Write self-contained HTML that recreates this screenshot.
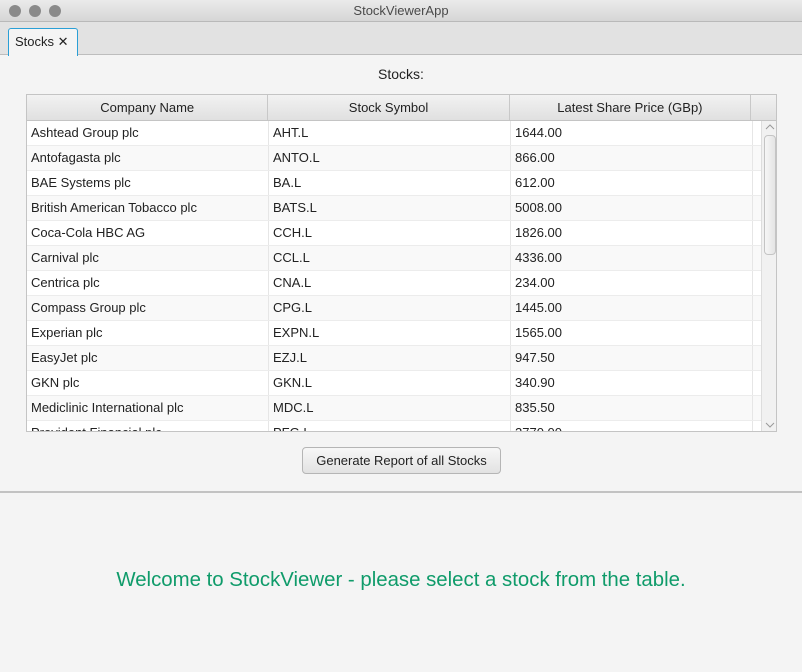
<!DOCTYPE html>
<html><head><meta charset="utf-8"><style>
*{margin:0;padding:0;box-sizing:border-box}
body{width:802px;height:672px;background:#f4f4f4;font-family:"Liberation Sans",sans-serif;font-size:13px;color:#222;position:relative;overflow:hidden}
.title{position:absolute;left:0;top:0;width:802px;height:22px;background:linear-gradient(#ebebeb,#d6d6d6);border-bottom:1px solid #b9b9b9;text-align:center;line-height:22px;font-size:13px;color:#4a4a4a}
.dot{position:absolute;top:5px;width:12px;height:12px;border-radius:50%;background:#8a8a8a}
.tabbar{position:absolute;left:0;top:22px;width:802px;height:33px;background:#e2e2e2;border-bottom:1px solid #bdbdbd}
.tab{position:absolute;left:8px;top:6px;width:70px;height:28px;background:#f4f4f4;border:1px solid #2a9fd6;border-bottom:none;border-radius:3px 3px 0 0;font-size:13px;line-height:26px;padding-left:6px}
.lbl{position:absolute;top:66px;left:0;width:802px;text-align:center;font-size:14px}
.table{position:absolute;left:26px;top:94px;width:751px;height:338px;border:1px solid #c4c4c4;background:#fff;overflow:hidden}
.hdr{height:26px;background:linear-gradient(#f2f2f2,#e0e0e0);border-bottom:1px solid #c4c4c4;display:flex}
.hdr div{border-right:1px solid #c8c8c8;text-align:center;line-height:25px;font-size:13px}
.row{height:25px;display:flex;border-bottom:1px solid #ececec;background:#fff}
.row:nth-child(even){background:#f9f9f9}
.row div{border-right:1px solid #e6e6e6;line-height:24px;padding-left:4px;font-size:13px}
.c1{width:242px}.c2{width:242px}.c3{width:242px}
.sb{position:absolute;left:734px;top:26px;width:16px;height:312px;background:#f1f1f1;border-left:1px solid #ddd}
.thumb{position:absolute;left:2px;top:14px;width:12px;height:120px;border:1px solid #c4c4c4;border-radius:4px;background:linear-gradient(90deg,#f6f6f6,#e4e4e4)}
.btn{position:absolute;left:302px;top:447px;width:199px;height:27px;border:1px solid #b5b5b5;border-radius:4px;background:linear-gradient(#f7f7f7,#e2e2e2);text-align:center;line-height:25px;font-size:13px}
.div{position:absolute;left:0;top:491px;width:802px;height:2px;background:#c2c2c2}
.welcome{position:absolute;left:0;top:569px;width:802px;text-align:center;font-size:20.4px;color:#0f9b6a}
</style></head><body>
<div class="title">StockViewerApp<span class="dot" style="left:9px"></span><span class="dot" style="left:29px"></span><span class="dot" style="left:49px"></span></div>
<div class="tabbar"><div class="tab">Stocks ✕</div></div>
<div class="lbl">Stocks:</div>
<div class="table">
<div class="hdr"><div class="c1">Company Name</div><div class="c2">Stock Symbol</div><div class="c3">Latest Share Price (GBp)</div><div style="width:25px;border:none"></div></div>
<div>
<div class="row"><div class="c1">Ashtead Group plc</div><div class="c2">AHT.L</div><div class="c3">1644.00</div></div>
<div class="row"><div class="c1">Antofagasta plc</div><div class="c2">ANTO.L</div><div class="c3">866.00</div></div>
<div class="row"><div class="c1">BAE Systems plc</div><div class="c2">BA.L</div><div class="c3">612.00</div></div>
<div class="row"><div class="c1">British American Tobacco plc</div><div class="c2">BATS.L</div><div class="c3">5008.00</div></div>
<div class="row"><div class="c1">Coca-Cola HBC AG</div><div class="c2">CCH.L</div><div class="c3">1826.00</div></div>
<div class="row"><div class="c1">Carnival plc</div><div class="c2">CCL.L</div><div class="c3">4336.00</div></div>
<div class="row"><div class="c1">Centrica plc</div><div class="c2">CNA.L</div><div class="c3">234.00</div></div>
<div class="row"><div class="c1">Compass Group plc</div><div class="c2">CPG.L</div><div class="c3">1445.00</div></div>
<div class="row"><div class="c1">Experian plc</div><div class="c2">EXPN.L</div><div class="c3">1565.00</div></div>
<div class="row"><div class="c1">EasyJet plc</div><div class="c2">EZJ.L</div><div class="c3">947.50</div></div>
<div class="row"><div class="c1">GKN plc</div><div class="c2">GKN.L</div><div class="c3">340.90</div></div>
<div class="row"><div class="c1">Mediclinic International plc</div><div class="c2">MDC.L</div><div class="c3">835.50</div></div>
<div class="row"><div class="c1">Provident Financial plc</div><div class="c2">PFG.L</div><div class="c3">2770.00</div></div>
</div>
<div class="sb"><svg style="position:absolute;left:3px;top:3px" width="10" height="6"><path d="M1 5L5 1L9 5" fill="none" stroke="#999"/></svg><div class="thumb"></div><svg style="position:absolute;left:3px;top:301px" width="10" height="6"><path d="M1 1L5 5L9 1" fill="none" stroke="#999"/></svg></div>
</div>
<div class="btn">Generate Report of all Stocks</div>
<div class="div"></div>
<div class="welcome">Welcome to StockViewer - please select a stock from the table.</div>
</body></html>
